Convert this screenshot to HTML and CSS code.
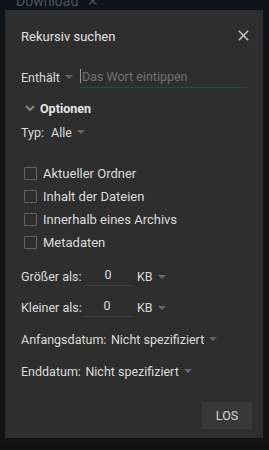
FILE: index.html
```html
<!DOCTYPE html>
<html lang="de">
<head>
<meta charset="utf-8">
<link rel="stylesheet" href="styles.css">
</head>
<body>
<div class="backdrop">
  <div class="tabbar"><span class="tab">Download</span><span class="tabx">✕</span></div>
</div>
<div class="dialog">
  <div class="head">
    <span class="title">Rekursiv suchen</span>
    <svg class="close" width="11" height="11" viewBox="0 0 11 11"><path d="M0.8 0.8L10.2 10.2M10.2 0.8L0.8 10.2" stroke="#c8c8c8" stroke-width="1.5" fill="none"/></svg>
  </div>
  <div class="row search">
    <span class="lbl">Enthält</span><span class="tri"></span>
    <div class="input"><span class="caret"></span><span class="ph">Das Wort eintippen</span></div>
  </div>
  <div class="row opt">
    <svg class="chev" width="10" height="7" viewBox="0 0 10 7"><path d="M1 1L5 5L9 1" stroke="#8a8a8a" stroke-width="2" fill="none"/></svg>
    <span class="bold">Optionen</span>
  </div>
  <div class="row typ"><span class="lbl">Typ:</span><span class="val">Alle</span><span class="tri"></span></div>
  <div class="checks">
    <label class="check"><span class="box"></span>Aktueller Ordner</label>
    <label class="check"><span class="box"></span>Inhalt der Dateien</label>
    <label class="check"><span class="box"></span>Innerhalb eines Archivs</label>
    <label class="check"><span class="box"></span>Metadaten</label>
  </div>
  <div class="row size first"><span class="lbl w1">Größer als:</span><span class="num n1">0</span><span class="unit">KB</span><span class="tri"></span></div>
  <div class="row size"><span class="lbl w2">Kleiner als:</span><span class="num n2">0</span><span class="unit">KB</span><span class="tri"></span></div>
  <div class="row date"><span class="lbl">Anfangsdatum:</span><span class="val">Nicht spezifiziert</span><span class="tri"></span></div>
  <div class="row date"><span class="lbl">Enddatum:</span><span class="val">Nicht spezifiziert</span><span class="tri"></span></div>
  <div class="foot"><span class="btn">LOS</span></div>
</div>
</body>
</html>
```
FILE: styles.css
```css
html, body { margin: 0; padding: 0; }
body {
  width: 269px; height: 450px; overflow: hidden;
  background: #111111;
  font-family: Roboto, "Noto Sans", sans-serif;
  color: #dcdcdc;
  position: relative;
}
.backdrop { height: 450px; background: #121314; }
.tabbar {
  height: 40px; background: #0e141a;
  padding-left: 16px; display: flex; align-items: flex-start; gap: 9px;
  font-size: 14px; color: #4a5560; line-height: 1; margin-top: -6px;
}
.dialog {
  position: absolute; left: 5px; top: 10px; width: 258px; height: 428px;
  background: #2e2e2e; box-sizing: border-box; padding: 0 16px;
}
.head { height: 52px; display: flex; align-items: center; justify-content: space-between; }
.title { font-size: 13px; color: #e2e2e2; }
.close { margin-right: -2px; margin-top: -1px; }
.row { display: flex; align-items: center; font-size: 12.5px; white-space: nowrap; }
.lbl { flex-shrink: 0; }
.search { height: 30px; }
.tri { width: 0; height: 0; border-left: 4.5px solid transparent; border-right: 4.5px solid transparent; border-top: 4.5px solid #666666; margin-left: 5px; flex-shrink: 0; }
.input { flex: 1; margin-left: 7px; height: 23px; box-sizing: border-box; border-bottom: 1px solid #274753; display: flex; align-items: center; align-self: flex-start; margin-top: 3px; }
.caret { width: 1px; height: 14px; background: #8a9aa0; margin-right: 1px; }
.ph { color: #727272; }
.opt { height: 32px; padding-left: 4px; }
.chev { margin-right: 5px; }
.bold { font-weight: 700; color: #e4e4e4; }
.typ { height: 16px; }
.typ .val { margin-left: 7px; }
.checks { margin-top: 22.6px; padding-left: 3px; }
.check { display: flex; align-items: center; height: 22.7px; font-size: 13px; white-space: nowrap; }
.box { width: 13px; height: 13px; border: 1.5px solid #626262; box-sizing: border-box; border-radius: 1px; margin-right: 6px; }
.size { height: 31px; }
.size.first { margin-top: 8px; }
.w1 { width: 63px; }
.w2 { width: 61px; }
.num { text-align: center; border-bottom: 1px solid #3f3f3f; height: 20px; line-height: 18px; box-sizing: border-box; align-self: flex-start; margin-top: 5px; }
.n1 { width: 48px; }
.n2 { width: 50px; }
.unit { margin-left: 5px; }
.date { height: 32px; }
.date .val { margin-left: 4.5px; }
.foot { display: flex; justify-content: flex-end; margin-top: 15px; margin-right: -5px; }
.btn { width: 50px; height: 27px; background: #383838; display: flex; align-items: center; justify-content: center; font-size: 12.5px; color: #d8d8d8; }
```
